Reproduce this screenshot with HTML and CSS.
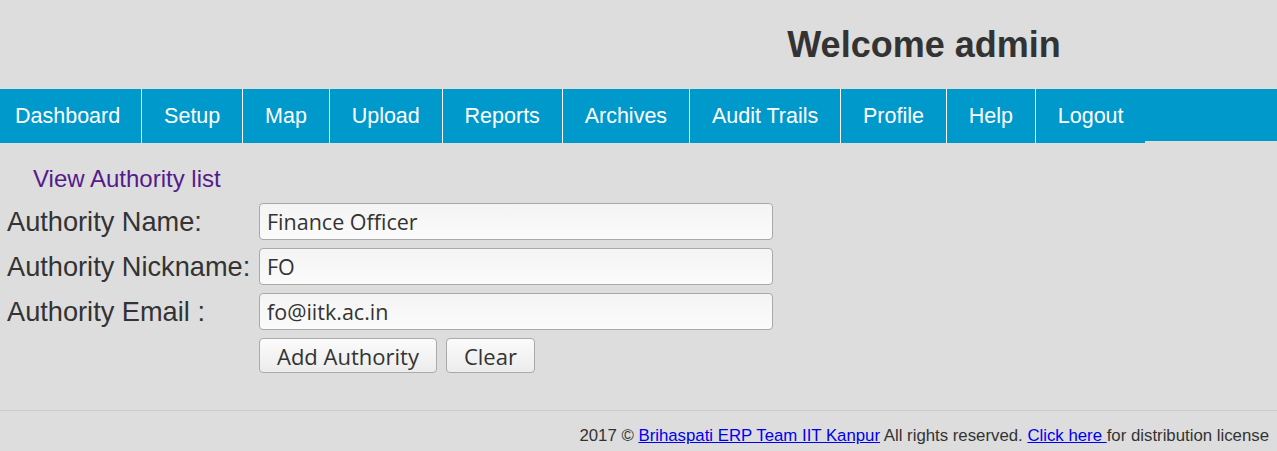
FILE: index.html
```html
<!DOCTYPE html>
<html lang="en">
<head>
<meta charset="utf-8">
<title>Add Authority</title>
<link rel="stylesheet" href="styles.css">
</head>
<body>
<header class="header">
  <h1 class="welcome">Welcome admin</h1>
</header>
<nav class="nav">
  <ul class="menu">
    <li class="menu-item first"><a href="#">Dashboard</a></li>
    <li class="menu-item"><a href="#">Setup</a></li>
    <li class="menu-item"><a href="#">Map</a></li>
    <li class="menu-item"><a href="#">Upload</a></li>
    <li class="menu-item"><a href="#">Reports</a></li>
    <li class="menu-item"><a href="#">Archives</a></li>
    <li class="menu-item"><a href="#">Audit Trails</a></li>
    <li class="menu-item"><a href="#">Profile</a></li>
    <li class="menu-item"><a href="#">Help</a></li>
    <li class="menu-item last"><a href="#">Logout</a></li>
  </ul>
</nav>
<main class="content">
  <a class="view-link" href="#">View Authority list</a>
  <form class="auth-form">
    <label class="label" for="aname">Authority Name:</label>
    <input class="field" id="aname" type="text" value="Finance Officer">
    <label class="label" for="anick">Authority Nickname:</label>
    <input class="field" id="anick" type="text" value="FO">
    <label class="label" for="aemail">Authority Email :</label>
    <input class="field" id="aemail" type="text" value="fo@iitk.ac.in">
    <span class="spacer"></span>
    <div class="buttons">
      <button class="btn" type="button">Add Authority</button>
      <button class="btn" type="button">Clear</button>
    </div>
  </form>
</main>
<footer class="footer">
  2017 &copy; <a href="#" class="flink">Brihaspati ERP Team IIT Kanpur</a> All rights reserved. <a href="#" class="flink">Click here </a>for distribution license
</footer>
</body>
</html>
```
FILE: styles.css
```css
html, body {
  margin: 0;
  padding: 0;
}
body {
  background: #dddddd;
  font-family: "Liberation Sans", Arial, sans-serif;
  color: #333333;
  width: 1277px;
  height: 451px;
  overflow: hidden;
}
.header {
  height: 89px;
  box-sizing: border-box;
  padding: 24px 0 0 571px;
}
.welcome {
  margin: 0;
  font-size: 36px;
  line-height: 41px;
  font-weight: bold;
  text-align: center;
  color: #333333;
}
.nav {
  height: 52px;
  background: #0099cc;
}
.menu {
  list-style: none;
  margin: 0;
  padding: 0;
  display: flex;
}
.menu-item {
  height: 54px;
  background: #0099cc;
  border-right: 1px solid #ffffff;
}
.menu-item.last {
  border-right: none;
}
.menu-item a {
  display: block;
  padding: 0 21.9px;
  line-height: 54px;
  font-size: 21.5px;
  color: #ffffff;
  text-decoration: none;
}
.menu-item.first a {
  padding-left: 15px;
  padding-right: 21px;
}
.content {
  padding: 25px 0 0 7px;
  height: 245px;
  box-sizing: border-box;
}
.view-link {
  display: block;
  margin-left: 26px;
  font-size: 24px;
  line-height: 26px;
  color: #551a8b;
  text-decoration: none;
}
.auth-form {
  margin-top: 11px;
  display: grid;
  grid-template-columns: 244px 514px;
  column-gap: 8px;
  row-gap: 8px;
  align-items: center;
}
.label {
  font-size: 27.2px;
  line-height: 31px;
  color: #333333;
  white-space: nowrap;
}
.field {
  box-sizing: border-box;
  width: 514px;
  height: 37px;
  margin: 0;
  padding: 0 7px;
  border: 1px solid #a9a9a9;
  border-radius: 4px;
  background: linear-gradient(#f4f4f4, #fbfbfb);
  font-family: "Open Sans", "Noto Sans", sans-serif;
  font-size: 21.5px;
  color: #333333;
}
.buttons {
  display: flex;
  gap: 9px;
  align-self: start;
}
.btn {
  box-sizing: border-box;
  height: 35px;
  margin: 0;
  padding: 0 17px;
  border: 1px solid #aaaaaa;
  border-radius: 4px;
  background: linear-gradient(#fbfbfb, #ececec);
  font-family: "Open Sans", "Noto Sans", sans-serif;
  font-size: 22px;
  color: #333333;
}
.footer {
  border-top: 1px solid #cacaca;
  margin-top: 24px;
  padding: 15px 8px 0 0;
  text-align: right;
  font-size: 16.8px;
  line-height: 19px;
  color: #333333;
}
.flink {
  color: #0000ee;
  text-decoration: underline;
}
```
